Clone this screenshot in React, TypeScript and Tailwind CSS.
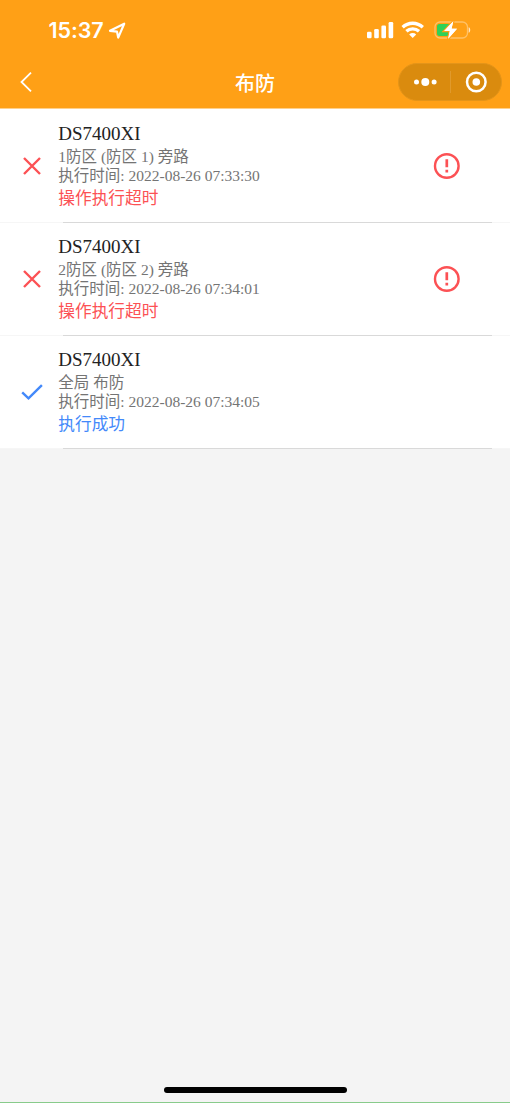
type Item = { detail: string; time: string; status: string; ok: boolean };

const items: Item[] = [
  { detail: '1防区 (防区 1) 旁路', time: '2022-08-26 07:33:30', status: '操作执行超时', ok: false },
  { detail: '2防区 (防区 2) 旁路', time: '2022-08-26 07:34:01', status: '操作执行超时', ok: false },
  { detail: '全局 布防', time: '2022-08-26 07:34:05', status: '执行成功', ok: true },
];

function StatusBar() {
  return (
    <div className="flex h-[56px] items-start pl-[48.5px] pr-[38px] text-white">
      <span className="mt-[17px] w-[56px] whitespace-nowrap font-['Inter',sans-serif] text-[21.5px] leading-[26px] font-semibold tracking-[-0.1px]">15:37</span>
      <svg className="mt-[22px] ml-[3.5px]" width="19" height="18" viewBox="0 0 19 18" fill="none" stroke="white" strokeWidth="2.2" strokeLinejoin="round">
        <path d="M2 8.8 16.2 1.7 10.2 15.6 9 9.6Z" />
      </svg>
      <div className="ml-auto flex items-start">
        <svg className="mt-[21px]" width="28" height="18" viewBox="0 0 28 18" fill="white">
          <rect x="1" y="10.8" width="4.6" height="6.4" rx="1.3" />
          <rect x="8.2" y="8" width="4.6" height="9.2" rx="1.3" />
          <rect x="15.4" y="4.5" width="4.6" height="12.7" rx="1.3" />
          <rect x="22.6" y="1" width="4.6" height="16.2" rx="1.3" />
        </svg>
        <svg className="mt-[21px] ml-[7px]" width="24" height="18" viewBox="0 0 24 18" fill="none" stroke="white" strokeWidth="3.3">
          <path d="M1.6 6.3a14.6 14.6 0 0 1 20.2 0" />
          <path d="M5.4 10.3a9.2 9.2 0 0 1 12.6 0" />
          <path d="M8.2 13.4a5.1 5.1 0 0 1 7 0L11.7 17Z" fill="white" stroke="none" />
        </svg>
        <svg className="mt-[20px] ml-[9px]" width="38" height="20" viewBox="0 0 38 20" fill="none">
          <rect x="1" y="2" width="32.5" height="16" rx="5" stroke="white" strokeOpacity=".35" strokeWidth="1.3" />
          <path d="M35 7.6q2 2.4 0 4.8z" fill="white" fillOpacity=".6" stroke="white" strokeOpacity=".4" />
          <path d="M5.5 4H16v12H5.5a2.5 2.5 0 0 1-2.5-2.5v-7A2.5 2.5 0 0 1 5.5 4Z" fill="#30d158" />
          <path d="M19.3 1.3 10.2 11h5.6L14.2 18.8 23 8.8h-5.5Z" fill="white" stroke="#ffa016" strokeWidth="2.4" paintOrder="stroke" />
          <path d="M19.3 1.3 10.2 11h5.6L14.2 18.8 23 8.8h-5.5Z" fill="white" />
        </svg>
      </div>
    </div>
  );
}

function NavBar() {
  return (
    <div className="grid h-[52px] grid-cols-[1fr_auto_1fr] items-center pl-[18px] pr-[8px] text-white">
      <svg width="15" height="22" viewBox="0 0 15 22" fill="none" stroke="white" strokeWidth="1.8">
        <path d="M13 1.6 3.5 11 13 20.4" />
      </svg>
      <h1 className="pt-[2px] pr-[10px] font-['Noto_Sans_CJK_SC',sans-serif] text-[20px] leading-[26px] font-medium">布防</h1>
      <div className="flex h-[38px] w-[104px] items-center justify-self-end rounded-full border border-[#e49419] bg-[#da8b0e]">
        <svg width="51" height="24" viewBox="0 0 51 24" fill="white">
          <circle cx="17.5" cy="12" r="2.5" />
          <circle cx="26.3" cy="12" r="4" />
          <circle cx="35.1" cy="12" r="2.5" />
        </svg>
        <span className="h-[22px] w-px bg-[#e09a2c]" />
        <svg width="50" height="24" viewBox="0 0 50 24" fill="none">
          <circle cx="25.3" cy="12" r="9.3" stroke="white" strokeWidth="2.5" />
          <circle cx="25.3" cy="12" r="3.8" fill="white" />
        </svg>
      </div>
    </div>
  );
}

function Row({ item }: { item: Item }) {
  return (
    <li className="flex h-[113px] flex-col bg-white">
      <div className="flex h-[113px] shrink-0 items-center">
        <div className="flex w-[58.3px] justify-center pl-[6px]">
          {item.ok ? (
            <svg width="22" height="18" viewBox="0 0 22 18" fill="none" stroke="#4389fa" strokeWidth="2.4">
              <path d="M1.2 9.4 7.5 15.4 20.9 2.2" />
            </svg>
          ) : (
            <svg width="18" height="18" viewBox="0 0 18 18" fill="none" stroke="#fc5154" strokeWidth="2.4">
              <path d="M1 1 17 17M17 1 1 17" />
            </svg>
          )}
        </div>
        <div className="flex-1 pt-px font-['Liberation_Serif','Noto_Sans_CJK_SC',serif]">
          <h2 className="text-[19px] leading-[24px] text-[#222222]">DS7400XI</h2>
          <p className="mt-[1px] text-[15.5px] leading-[19px] text-[#747474]">{item.detail}</p>
          <p className="text-[15.5px] leading-[19px] text-[#747474]">执行时间: {item.time}</p>
          <p className={item.ok ? 'mt-[2px] text-[16.7px] leading-[24px] text-[#4389fa]' : 'mt-[2px] text-[16.7px] leading-[24px] text-[#fc5154]'}>{item.status}</p>
        </div>
        <div className="flex w-[78.3px]">
          {!item.ok && (
            <svg width="28" height="28" viewBox="0 0 28 28" fill="none" stroke="#fc5154">
              <circle cx="14.8" cy="14" r="11.8" strokeWidth="2.4" />
              <path d="M14.8 7.3v8M14.8 17.8v2.8" strokeWidth="2.7" />
            </svg>
          )}
        </div>
      </div>
      <div className="z-10 h-px shrink-0 bg-[#f6f6f6] pl-[63px] pr-[18px]">
        <div className="h-px bg-[#d9d9d9]" />
      </div>
    </li>
  );
}

export default function App() {
  return (
    <div className="flex h-[1103px] w-[510px] flex-col overflow-hidden border-b border-[#88cb8b] bg-[#f4f4f4]">
      <header className="h-[109px] border-b border-[#ffd08b] bg-[#ffa016]">
        <StatusBar />
        <NavBar />
      </header>
      <ul className="-mt-px flex flex-col pt-px">
        {items.map((item) => (
          <Row key={item.time} item={item} />
        ))}
      </ul>
      <div className="mt-auto mb-[9px] h-[6px] w-[183px] self-center rounded-full bg-black" />
    </div>
  );
}
